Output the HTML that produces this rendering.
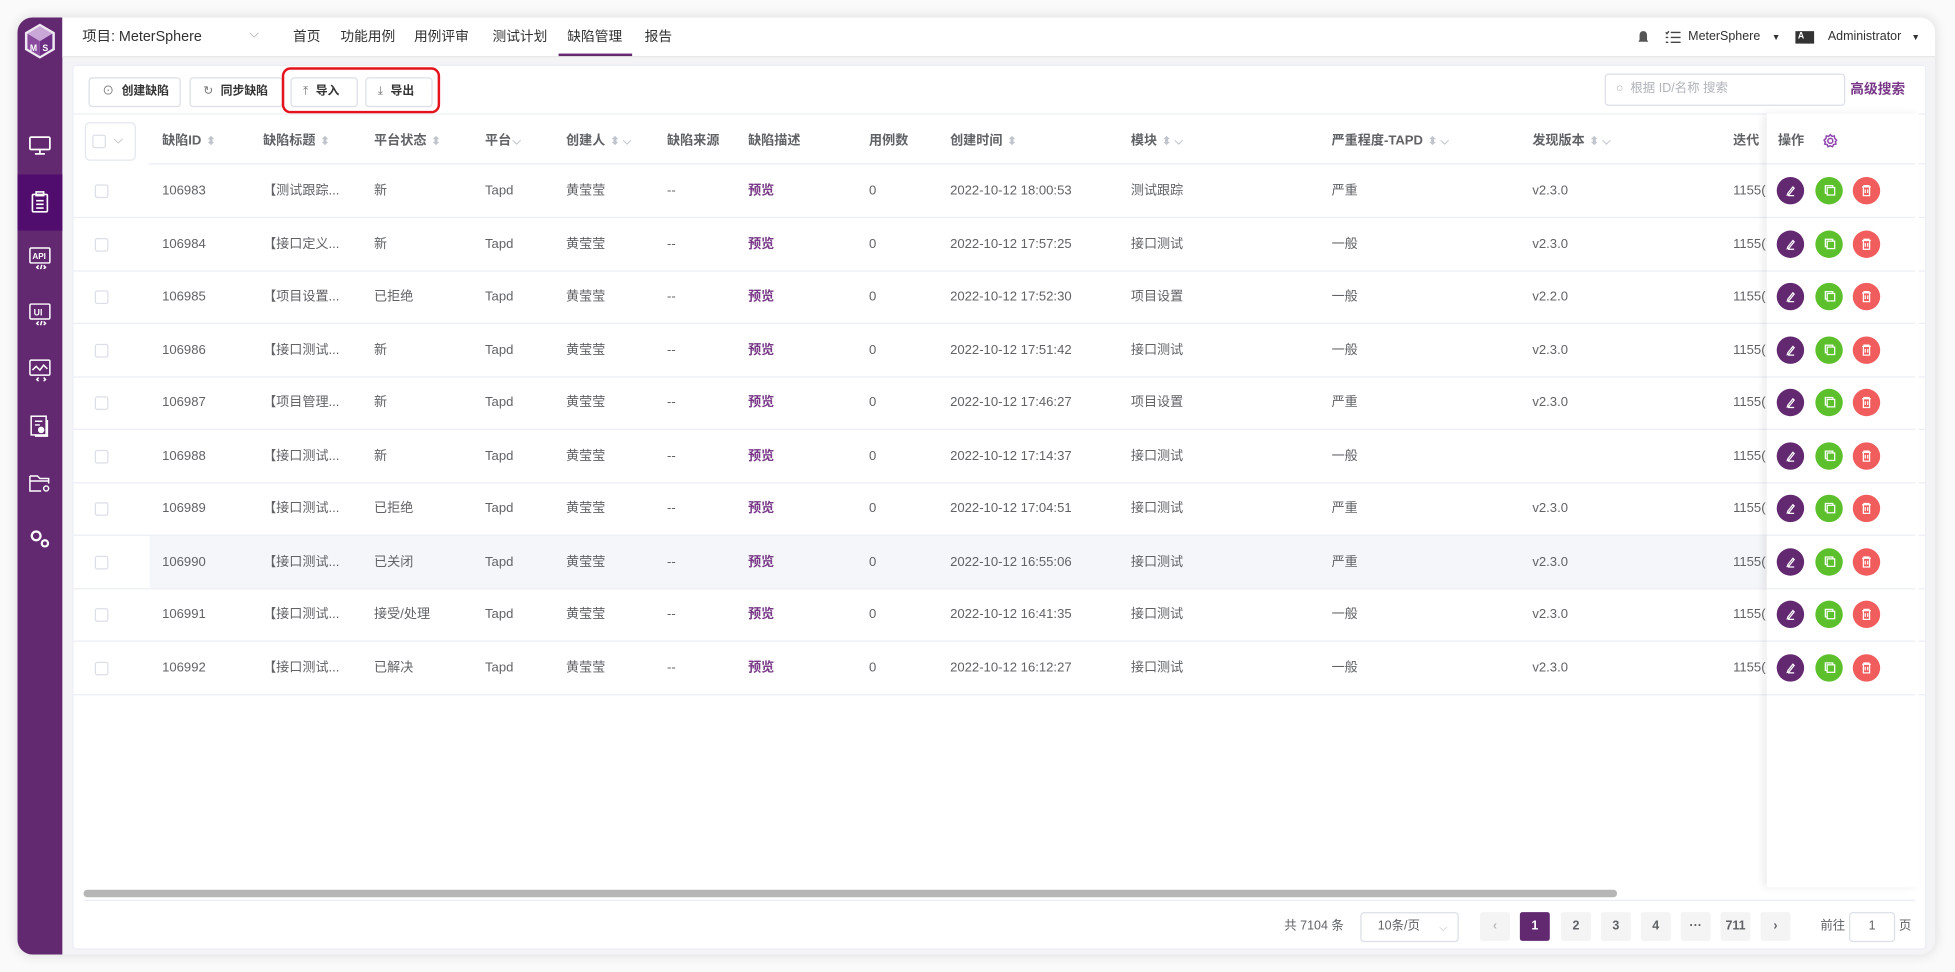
<!DOCTYPE html>
<html><head><meta charset="utf-8"><style>
*{box-sizing:border-box;margin:0;padding:0}
html,body{width:1955px;height:972px;overflow:hidden;background:#fff}
body{font-family:"Liberation Sans","Noto Sans CJK SC",sans-serif;color:#606266}
#w{position:absolute;left:0;top:0;width:1568px;height:780px;transform:scale(1.24681,1.24615);transform-origin:0 0;background:#fafafa}
.win{position:absolute;left:14px;top:14px;width:1538px;height:752px;border-radius:12px;background:#f4f4f6;overflow:hidden;box-shadow:0 0 10px rgba(0,0,0,.12)}
.side{position:absolute;left:0;top:0;width:36px;height:100%;background:#622870}
.side .act{position:absolute;left:0;top:126px;width:36px;height:45px;background:#510d6e}
.side svg{position:absolute;left:9px}
.hdr{position:absolute;left:36px;top:0;right:0;height:32px;background:#fff;border-bottom:1px solid #e6e6e6;font-size:11px;color:#303133}
.hdr span{position:absolute;top:9px;line-height:14px}
.a{position:absolute}
.card{position:absolute;left:44px;top:38px;width:1487px;height:710px;background:#fff;border:1px solid #ebeef5;border-radius:3px}
.btn{position:absolute;top:9px;height:24px;border:1px solid #dcdfe6;border-radius:3px;font-size:9.5px;color:#333;font-weight:bold;line-height:22px;padding-left:10px}
.btn i{font-style:normal;color:#777;font-weight:normal;margin-right:6px}
.t{position:absolute;font-size:10.5px;white-space:nowrap;line-height:14px}
.th{font-weight:bold;color:#606266;font-size:10.5px}
.cb{position:absolute;width:11px;height:11px;border:1px solid #dcdfe6;border-radius:2px;background:#fff}
.ln{position:absolute;height:1px;background:#ebeef5}
.c{position:absolute;width:22px;height:22px;border-radius:50%}
.pg{position:absolute;height:23px;width:24px;background:#f4f4f5;border-radius:2px;font-size:10px;font-weight:bold;text-align:center;line-height:23px;color:#606266}
.srt{display:inline-block;color:#c0c4cc;font-size:9px;margin-left:4px}
</style></head><body><div id="w">
<div class="win">
 <div class="side">
  <svg style="top:4px;left:4px" width="28" height="30" viewBox="0 0 28 30"><path d="M14 1L26 8V22L14 29L2 22V8Z" fill="#fff" opacity=".9"/><path d="M14 3L24 9L14 15L4 9Z" fill="#c9a7d6"/><path d="M4 9V21L14 27V15Z" fill="#8a4a9e"/><path d="M24 9V21L14 27V15Z" fill="#6c2f84"/><text x="6" y="23" font-size="7" fill="#fff" font-weight="bold" font-family="Liberation Sans">M</text><text x="16" y="23" font-size="7" fill="#fff" font-weight="bold" font-family="Liberation Sans">S</text></svg>
  <div class="act"></div>
  <svg style="top:95px" width="18" height="16" viewBox="0 0 18 16" fill="none" stroke="#fff" stroke-width="1.4"><rect x="1" y="1" width="16" height="10" rx="1"/><path d="M9 11v3M5 14.5h8"/></svg>
  <svg style="top:139px" width="18" height="18" viewBox="0 0 18 18" fill="none" stroke="#fff" stroke-width="1.3"><rect x="3" y="3" width="12" height="14" rx="1"/><rect x="6" y="1" width="6" height="3"/><path d="M6 8h6M6 11h6M6 14h6"/></svg>
  <svg style="top:184px" width="18" height="18" viewBox="0 0 18 18" fill="none" stroke="#fff" stroke-width="1.2"><rect x="1" y="1" width="16" height="12" rx="1"/><text x="3" y="10" font-size="6.5" fill="#fff" stroke="none" font-family="Liberation Sans" font-weight="bold">API</text><path d="M8 15l-1.5 1.5L8 18M12 15l1.5 1.5L12 18M10.5 14.5l-1 4"/></svg>
  <svg style="top:229px" width="18" height="18" viewBox="0 0 18 18" fill="none" stroke="#fff" stroke-width="1.2"><rect x="1" y="1" width="16" height="12" rx="1"/><text x="4" y="10" font-size="7" fill="#fff" stroke="none" font-family="Liberation Sans" font-weight="bold">UI</text><path d="M8 15l-1.5 1.5L8 18M12 15l1.5 1.5L12 18M10.5 14.5l-1 4"/></svg>
  <svg style="top:274px" width="18" height="18" viewBox="0 0 18 18" fill="none" stroke="#fff" stroke-width="1.2"><rect x="1" y="1" width="16" height="12" rx="1"/><path d="M3 9l3-3 3 3 3-4 3 3"/><path d="M8 15l-1.5 1.5L8 18M12 15l1.5 1.5L12 18"/></svg>
  <svg style="top:319px" width="18" height="18" viewBox="0 0 18 18" fill="none" stroke="#fff" stroke-width="1.2"><rect x="2" y="1" width="12" height="15"/><path d="M15 4v13H5"/><path d="M5 5h6M5 8h4"/><circle cx="10" cy="12" r="2" fill="#fff"/></svg>
  <svg style="top:364px" width="18" height="18" viewBox="0 0 18 18" fill="none" stroke="#fff" stroke-width="1.2"><path d="M1 4h6l2 2h7v4M1 4v12h9M1 8h15"/><circle cx="14" cy="14" r="2"/></svg>
  <svg style="top:409px" width="18" height="18" viewBox="0 0 18 18" fill="none" stroke="#fff" stroke-width="1.8"><circle cx="6" cy="7" r="3.5"/><circle cx="13" cy="13" r="2.5"/></svg>
 </div>
 <div class="hdr">
  <span style="left:16px;font-size:11.5px">项目: MeterSphere</span><span style="left:150px;color:#999;font-size:10px;top:7px">⌵</span>
  <span style="left:185px">首页</span><span style="left:223px">功能用例</span><span style="left:282px">用例评审</span><span style="left:345px">测试计划</span><span style="left:405px">缺陷管理</span><span style="left:467px">报告</span>
  <div class="a" style="left:398px;top:29px;width:59px;height:2px;background:#622870"></div>
  <svg class="a" style="left:1262px;top:10px" width="12" height="12" viewBox="0 0 12 12"><path d="M6 1C3.5 1 3 3 3 5v3L2 9.5h8L9 8V5C9 3 8.5 1 6 1zM5 10.5h2" fill="#555"/></svg>
  <svg class="a" style="left:1285px;top:10px" width="13" height="12" viewBox="0 0 13 12" fill="none" stroke="#444" stroke-width="1.1"><path d="M5 2h8M5 6h8M5 10h8M1 2l1 1 1.5-2M1 6h2M1 10h2"/></svg>
  <span style="left:1304px;font-size:10px">MeterSphere</span><span style="left:1371px;font-size:7px;top:10px">▼</span>
  <div class="a" style="left:1390px;top:11px;width:15px;height:10px;background:#333;color:#fff;font-size:7px;line-height:10px;font-weight:bold">&nbsp;A 文</div>
  <span style="left:1416px;font-size:10px">Administrator</span><span style="left:1483px;font-size:7px;top:10px">▼</span>
 </div>
 <div class="card">
  <div class="btn" style="left:12px;width:74px"><i>⊙</i>创建缺陷</div>
  <div class="btn" style="left:93px;width:75px"><i>↻</i>同步缺陷</div>
  <div class="btn" style="left:174px;width:54px;padding-left:9px"><i>⤒</i>导入</div>
  <div class="btn" style="left:234px;width:54px;padding-left:9px"><i>⤓</i>导出</div>
  <div class="a" style="left:167px;top:1px;width:127px;height:37px;border:2px solid #e5131d;border-radius:7px"></div>
  <div class="a" style="left:1228px;top:6px;width:193px;height:26px;border:1px solid #dcdfe6;border-radius:3px;font-size:10px;color:#b0b3b8;line-height:24px;padding-left:8px">○&nbsp; 根据 ID/名称 搜索</div>
  <div class="t" style="left:1425px;top:12px;color:#783887;font-weight:bold;font-size:11px">高级搜索</div>
  <div class="ln" style="left:0;right:0;top:38px"></div>
  <div class="a" style="left:9px;top:45px;width:41px;height:31px;border:1px solid #e4e7ed;border-radius:4px"></div>
  <div class="cb" style="left:15px;top:55px"></div><div class="t" style="left:32px;top:53px;color:#aaa;font-size:10px">⌵</div>
  <div class="ln" style="left:60px;right:0;top:78px"></div>
  <div class="t th" style="left:71px;top:53px">缺陷ID<span class="srt">⬍</span></div>
  <div class="t th" style="left:152px;top:53px">缺陷标题<span class="srt">⬍</span></div>
  <div class="t th" style="left:241px;top:53px">平台状态<span class="srt">⬍</span></div>
  <div class="t th" style="left:330px;top:53px">平台<span class="srt" style="margin-left:1px">⌵</span></div>
  <div class="t th" style="left:395px;top:53px">创建人<span class="srt">⬍ ⌵</span></div>
  <div class="t th" style="left:476px;top:53px">缺陷来源</div>
  <div class="t th" style="left:541px;top:53px">缺陷描述</div>
  <div class="t th" style="left:638px;top:53px">用例数</div>
  <div class="t th" style="left:703px;top:53px">创建时间<span class="srt">⬍</span></div>
  <div class="t th" style="left:848px;top:53px">模块<span class="srt">⬍ ⌵</span></div>
  <div class="t th" style="left:1009px;top:53px">严重程度-TAPD<span class="srt">⬍ ⌵</span></div>
  <div class="t th" style="left:1170px;top:53px">发现版本<span class="srt">⬍ ⌵</span></div>
  <div class="t th" style="left:1331px;top:53px">迭代</div>
  <div id="rows"></div>
  <div class="a" style="left:1358px;top:38px;width:122px;height:621px;background:#fff;box-shadow:-3px 0 6px rgba(0,0,0,.08)"></div>
  <div class="t th" style="left:1367px;top:53px">操作</div>
  <svg class="a" style="left:1403px;top:54px" width="12" height="12" viewBox="0 0 12 12" fill="none" stroke="#8e44ad" stroke-width="1.2"><circle cx="6" cy="6" r="2"/><path d="M6 1l1.3 1.4 1.9-.3.3 1.9L11 5.5 10 6.8l.5 1.8-1.9.4-.8 1.7L6 10l-1.8.7-.8-1.7-1.9-.4.5-1.8L1 5.5 2.5 4l.3-1.9 1.9.3z"/></svg>
  <div class="ln" style="left:1358px;right:8px;top:78px"></div>
  <div id="ops"></div>
  <div class="a" style="left:8px;top:661px;width:1230px;height:6px;background:#b6b6b6;border-radius:3px"></div>
  <div class="ln" style="left:8px;right:8px;top:669px"></div>
  <div class="t" style="left:971px;top:684px;font-size:10px">共 7104 条</div>
  <div class="a" style="left:1032px;top:679px;width:79px;height:24px;border:1px solid #dcdfe6;border-radius:3px;font-size:10px;line-height:22px;padding-left:13px">10条/页<span style="position:absolute;right:8px;color:#bbb;font-size:9px">⌵</span></div>
  <div class="pg" style="left:1128px;top:679px;color:#bbb">‹</div>
  <div class="pg" style="left:1160px;top:679px;background:#622870;color:#fff">1</div>
  <div class="pg" style="left:1193px;top:679px">2</div>
  <div class="pg" style="left:1225px;top:679px">3</div>
  <div class="pg" style="left:1257px;top:679px">4</div>
  <div class="pg" style="left:1289px;top:679px">···</div>
  <div class="pg" style="left:1321px;top:679px">711</div>
  <div class="pg" style="left:1353px;top:679px">›</div>
  <div class="t" style="left:1401px;top:684px;font-size:10px">前往</div>
  <div class="a" style="left:1424px;top:679px;width:37px;height:24px;border:1px solid #dcdfe6;border-radius:3px;font-size:10px;line-height:22px;text-align:center">1</div>
  <div class="t" style="left:1464px;top:684px;font-size:10px">页</div>
 </div>
</div>
</div>
<script>
var d=[["106983","【测试跟踪...","新","2022-10-12 18:00:53","测试跟踪","严重","v2.3.0"],
["106984","【接口定义...","新","2022-10-12 17:57:25","接口测试","一般","v2.3.0"],
["106985","【项目设置...","已拒绝","2022-10-12 17:52:30","项目设置","一般","v2.2.0"],
["106986","【接口测试...","新","2022-10-12 17:51:42","接口测试","一般","v2.3.0"],
["106987","【项目管理...","新","2022-10-12 17:46:27","项目设置","严重","v2.3.0"],
["106988","【接口测试...","新","2022-10-12 17:14:37","接口测试","一般",""],
["106989","【接口测试...","已拒绝","2022-10-12 17:04:51","接口测试","严重","v2.3.0"],
["106990","【接口测试...","已关闭","2022-10-12 16:55:06","接口测试","严重","v2.3.0"],
["106991","【接口测试...","接受/处理","2022-10-12 16:41:35","接口测试","一般","v2.3.0"],
["106992","【接口测试...","已解决","2022-10-12 16:12:27","接口测试","一般","v2.3.0"]];
var h="",o="";
d.forEach(function(r,i){var y=79+i*42.5,ty=y+14;
if(i==7)h+='<div class="a" style="left:61px;width:1297px;top:'+y+'px;height:42px;background:#f5f6fa"></div>';
h+='<div class="cb" style="left:17px;top:'+(y+16)+'px"></div>';
var cols=[[71,r[0]],[152,r[1]],[241,r[2]],[330,"Tapd"],[395,"黄莹莹"],[476,"--"],[638,"0"],[703,r[3]],[848,r[4]],[1009,r[5]],[1170,r[6]],[1331,"1155("]];
cols.forEach(function(c){h+='<div class="t" style="left:'+c[0]+'px;top:'+ty+'px">'+c[1]+'</div>'});
h+='<div class="t" style="left:541px;top:'+ty+'px;color:#783887;font-weight:bold">预览</div>';
h+='<div class="ln" style="left:0;right:0;top:'+(y+42)+'px"></div>';
var cy=y+10;
o+='<div class="c" style="left:1366px;top:'+cy+'px;background:#622870"><svg width="22" height="22" viewBox="0 0 22 22" fill="none" stroke="#fff" stroke-width="1"><path d="M9 13l4-5 1 1-4 5-1.5.5zM9 15h5"/></svg></div>';
o+='<div class="c" style="left:1397px;top:'+cy+'px;background:#5bc02b"><svg width="22" height="22" viewBox="0 0 22 22" fill="none" stroke="#fff" stroke-width="1"><rect x="8" y="7" width="6" height="6"/><rect x="9.5" y="8.5" width="6" height="6" fill="#5bc02b"/></svg></div>';
o+='<div class="c" style="left:1427px;top:'+cy+'px;background:#f15d5d"><svg width="22" height="22" viewBox="0 0 22 22" fill="none" stroke="#fff" stroke-width="1"><path d="M7.5 8h7M9 8V7h4v1M8.5 8v7h5V8M10 10v3M12 10v3"/></svg></div>';
o+='<div class="ln" style="left:1358px;right:8px;top:'+(y+42)+'px"></div>';
});
document.getElementById("rows").outerHTML=h;
document.getElementById("ops").outerHTML=o;
</script>
</body></html>
